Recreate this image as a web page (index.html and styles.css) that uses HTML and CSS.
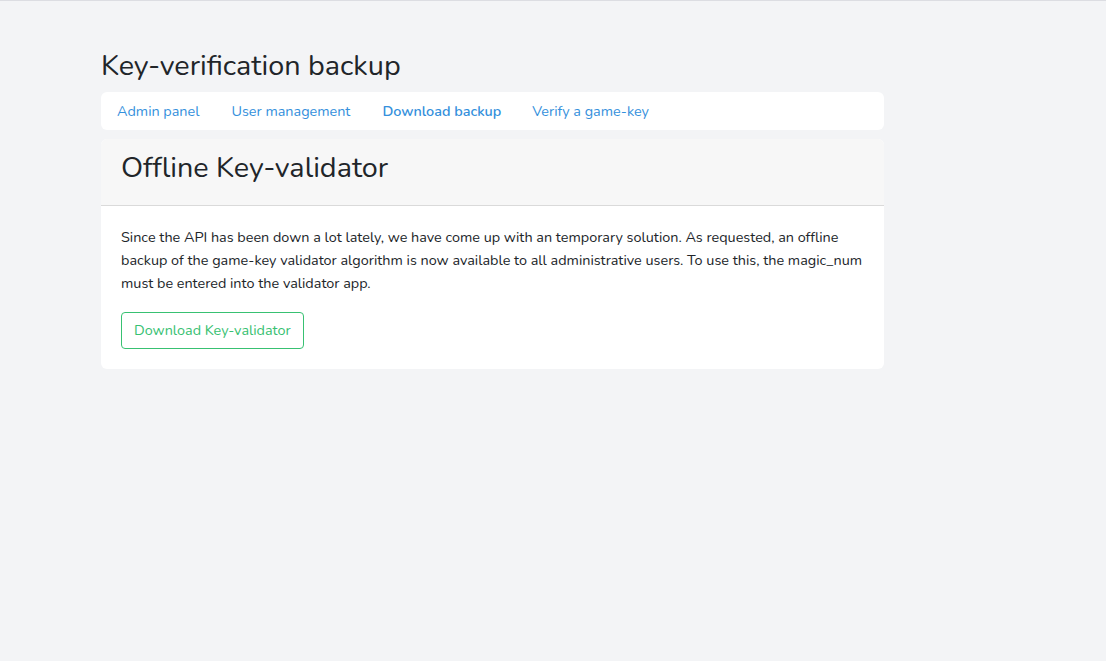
FILE: index.html
```html
<!DOCTYPE html>
<html lang="en">
<head>
<meta charset="utf-8">
<title>Key-verification backup</title>
<link rel="stylesheet" href="styles.css">
</head>
<body>
<main class="page">
  <h2 class="page-title">Key-verification backup</h2>
  <nav class="nav-card">
    <a class="nav-link" href="#">Admin panel</a>
    <a class="nav-link" href="#">User management</a>
    <a class="nav-link active" href="#">Download backup</a>
    <a class="nav-link" href="#">Verify a game-key</a>
  </nav>
  <section class="card">
    <header class="card-header">
      <h2 class="card-title">Offline Key-validator</h2>
    </header>
    <div class="card-body">
      <p class="card-text">Since the API has been down a lot lately, we have come up with an temporary solution. As requested, an offline backup of the game-key validator algorithm is now available to all administrative users. To use this, the magic_num must be entered into the validator app.</p>
      <a class="btn-outline" href="#">Download Key-validator</a>
    </div>
  </section>
</main>
</body>
</html>
```
FILE: styles.css
```css
html, body {
  margin: 0;
  padding: 0;
}
body {
  background: #f3f4f6;
  border-top: 1px solid #dcdde2;
  font-family: "Nunito", "Open Sans", sans-serif;
  font-size: 14.4px;
  line-height: 1.6;
  color: #212529;
  min-height: 660px;
}
.page {
  width: 783px;
  margin-left: 101px;
  padding-top: 48px;
}
.page-title {
  font-size: 28.8px;
  font-weight: 400;
  line-height: 1.2;
  margin: 0 0 8px 0;
}
.nav-card {
  display: flex;
  background: #fff;
  border-radius: 6px;
}
.nav-link {
  padding: 8.5px 16px 6.5px 16px;
  color: #3490dc;
  text-decoration: none;
}
.nav-link.active {
  font-weight: 600;
  padding-right: 15px;
}
.card {
  margin-top: 9px;
  background: #fff;
  border-radius: 6px;
  overflow: hidden;
}
.card-header {
  background: #f7f7f7;
  padding: 12px 20px;
  border-bottom: 1px solid #dadada;
}
.card-title {
  font-size: 28.8px;
  font-weight: 400;
  line-height: 1.2;
  margin: 0 0 8px 0;
}
.card-body {
  padding: 20px;
}
.card-text {
  margin: 0 0 17px 0;
}
.btn-outline {
  display: inline-block;
  padding: 6px 12px;
  border: 1px solid #38c172;
  border-radius: 4px;
  color: #38c172;
  text-decoration: none;
}
```
